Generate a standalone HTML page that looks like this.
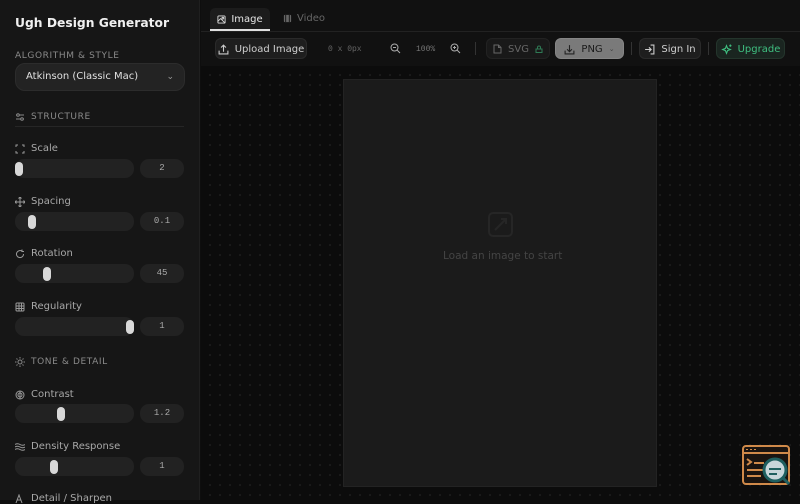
<!DOCTYPE html>
<html><head><style>
*{box-sizing:border-box;margin:0;padding:0}
body{width:800px;height:500px;overflow:hidden;background:#0e0e0e;font-family:"Liberation Sans","DejaVu Sans",sans-serif;position:relative;color:#ccc}
.a{position:absolute}
#side{left:0;top:0;width:200px;height:500px;background:#161616;border-right:1px solid #1f1f1f}
.lbl{font-size:9px;letter-spacing:.6px;color:#8a8a8a;font-family:"DejaVu Sans",sans-serif}
.fl{font-size:10px;color:#a8a8a8;font-family:"DejaVu Sans",sans-serif;display:flex;align-items:center;gap:6px}
.tr{left:15px;width:119px;height:19px;border-radius:9px;background:#222}
.th{width:8px;height:14px;border-radius:4px;background:#d8d8d8;top:2.5px}
.vb{left:140px;width:44px;height:19px;border-radius:9px;background:#222;font:9px "Liberation Mono",monospace;color:#aaa;text-align:center;line-height:19px}
#main{left:201px;top:66px;width:599px;height:434px;background-color:#0c0c0c;background-image:radial-gradient(circle,#1c1c1c 0.8px,transparent 1.2px);background-size:10px 10px;background-position:4px 4px}
.btn{top:38px;height:21px;border-radius:6px;background:#1e1e1e;border:1px solid #2a2a2a;font-size:10px;font-family:"DejaVu Sans",sans-serif;display:flex;align-items:center;justify-content:center;gap:6px;color:#cfcfcf;padding-top:1px}
.sep{top:42px;width:1px;height:13px;background:#333}
svg{display:block}
</style></head><body>
<div id="side" class="a">
 <div class="a" style="left:15px;top:16px;font-size:12.3px;font-weight:bold;color:#f0f0f0;font-family:'DejaVu Sans',sans-serif">Ugh Design Generator</div>
 <div class="a lbl" style="left:15px;top:51px">ALGORITHM &amp; STYLE</div>
 <div class="a" style="left:15px;top:63px;width:170px;height:28px;border-radius:10px;background:#232323;border:1px solid #2c2c2c;font-size:10px;font-family:'DejaVu Sans',sans-serif;color:#e0e0e0;padding-left:10px;line-height:26px">Atkinson (Classic Mac)<span class="a" style="right:10px;top:0;color:#999;font-size:9px">&#8964;</span></div>
 <div class="a lbl fl" style="left:15px;top:112px;font-size:9px;color:#8a8a8a">
  <svg width="10" height="10" viewBox="0 0 10 10" stroke="#888" fill="none"><path d="M1 3h8M1 7h8"/><circle cx="3" cy="3" r="1.3" fill="#161616"/><circle cx="7" cy="7" r="1.3" fill="#161616"/></svg>STRUCTURE</div>
 <div class="a" style="left:15px;top:126px;width:169px;height:1px;background:#262626"></div>

 <div class="a fl" style="left:15px;top:143px"><svg width="10" height="10" viewBox="0 0 10 10" stroke="#999" fill="none"><path d="M1 3V1h2M7 1h2v2M9 7v2H7M3 9H1V7"/></svg>Scale</div>
 <div class="a tr" style="top:159px"><div class="a th" style="left:0"></div></div><div class="a vb" style="top:159px">2</div>

 <div class="a fl" style="left:15px;top:196px"><svg width="10" height="10" viewBox="0 0 10 10" stroke="#999" fill="none"><path d="M5 0v10M0 5h10M3.5 1.5L5 0l1.5 1.5M3.5 8.5L5 10l1.5-1.5M1.5 3.5L0 5l1.5 1.5M8.5 3.5L10 5l-1.5 1.5"/></svg>Spacing</div>
 <div class="a tr" style="top:212px"><div class="a th" style="left:13px"></div></div><div class="a vb" style="top:212px">0.1</div>

 <div class="a fl" style="left:15px;top:248px"><svg width="10" height="10" viewBox="0 0 10 10" stroke="#999" fill="none"><path d="M8.5 5A3.5 3.5 0 1 1 7 2.2M7 0.5v2h2"/></svg>Rotation</div>
 <div class="a tr" style="top:264px"><div class="a th" style="left:28px"></div></div><div class="a vb" style="top:264px">45</div>

 <div class="a fl" style="left:15px;top:301px"><svg width="10" height="10" viewBox="0 0 10 10" stroke="#999" fill="none"><rect x="1" y="1" width="8" height="8" rx="1"/><path d="M1 4h8M1 6.5h8M4 1v8M6.5 1v8"/></svg>Regularity</div>
 <div class="a tr" style="top:317px"><div class="a th" style="left:111px"></div></div><div class="a vb" style="top:317px">1</div>

 <div class="a lbl fl" style="left:15px;top:357px;font-size:9px;color:#8a8a8a"><svg width="10" height="10" viewBox="0 0 10 10" stroke="#888" fill="none"><circle cx="5" cy="5" r="2"/><path d="M5 0v1.5M5 8.5V10M0 5h1.5M8.5 5H10M1.5 1.5l1 1M7.5 7.5l1 1M1.5 8.5l1-1M7.5 2.5l1-1"/></svg>TONE &amp; DETAIL</div>

 <div class="a fl" style="left:15px;top:389px"><svg width="10" height="10" viewBox="0 0 10 10" stroke="#999" fill="none"><circle cx="5" cy="5" r="4"/><path d="M5 1v8"/><circle cx="5" cy="5" r="2"/></svg>Contrast</div>
 <div class="a tr" style="top:404px"><div class="a th" style="left:42px"></div></div><div class="a vb" style="top:404px">1.2</div>

 <div class="a fl" style="left:15px;top:441px"><svg width="10" height="10" viewBox="0 0 10 10" stroke="#999" fill="none"><path d="M0 2.5q2.5-1.5 5 0t5 0M0 5q2.5-1.5 5 0t5 0M0 7.5q2.5-1.5 5 0t5 0"/></svg>Density Response</div>
 <div class="a tr" style="top:457px"><div class="a th" style="left:35px"></div></div><div class="a vb" style="top:457px">1</div>

 <div class="a fl" style="left:15px;top:493px"><svg width="10" height="10" viewBox="0 0 10 10" stroke="#999" fill="none"><path d="M1 9L4 1l3 8M2.5 6h3"/></svg>Detail / Sharpen</div>
</div>

<div class="a" style="left:201px;top:0;width:599px;height:66px;background:#111"></div>
<div class="a" style="left:201px;top:31px;width:599px;height:1px;background:#222"></div>
<div class="a" style="left:201px;top:66px;width:599px;height:1px;background:#1f1f1f"></div>
<div class="a" style="left:210px;top:8px;width:60px;height:23px;background:#1c1c1c;border-radius:5px 5px 0 0;border-bottom:2px solid #e0e0e0;font-size:10px;font-family:'DejaVu Sans',sans-serif;color:#e6e6e6;display:flex;align-items:center;justify-content:center;gap:5px;padding-top:1px"><svg width="9" height="9" viewBox="0 0 10 10" stroke="#ddd" fill="none"><rect x="1" y="1" width="8" height="8" rx="1"/><path d="M1 7l3-3 5 5"/><circle cx="6.5" cy="3.5" r="1"/></svg>Image</div>
<div class="a" style="left:283px;top:13px;font-size:10px;font-family:'DejaVu Sans',sans-serif;color:#666;display:flex;align-items:center;gap:5px"><svg width="9" height="9" viewBox="0 0 10 10" fill="#666"><rect x="1" y="1" width="8" height="8" rx="1"/><path d="M3 1v8M7 1v8" stroke="#111"/></svg>Video</div>

<div class="a btn" style="left:215px;width:92px"><svg width="11" height="11" viewBox="0 0 10 10" stroke="#ccc" fill="none"><path d="M1 6v3h8V6M5 7V1M2.8 3.2L5 1l2.2 2.2"/></svg>Upload Image</div>
<div class="a" style="left:328px;top:45px;font:8px 'Liberation Mono',monospace;color:#666">0 x 0px</div>
<div class="a" style="left:390px;top:43px"><svg width="11" height="11" viewBox="0 0 11 11" stroke="#aaa" fill="none"><circle cx="4.5" cy="4.5" r="3.5"/><path d="M7 7l3 3M3 4.5h3"/></svg></div>
<div class="a" style="left:416px;top:45px;font:8px 'Liberation Mono',monospace;color:#777">100%</div>
<div class="a" style="left:450px;top:43px"><svg width="11" height="11" viewBox="0 0 11 11" stroke="#aaa" fill="none"><circle cx="4.5" cy="4.5" r="3.5"/><path d="M7 7l3 3M3 4.5h3M4.5 3v3"/></svg></div>
<div class="a sep" style="left:475px"></div>
<div class="a btn" style="left:486px;width:64px;background:#191919;border-color:#222;color:#666"><svg width="9" height="10" viewBox="0 0 9 10" stroke="#666" fill="none"><path d="M1 1h4.5L8 3.5V9H1zM5.5 1v2.5H8"/></svg>SVG<svg width="8" height="8" viewBox="0 0 8 8" stroke="#2f7a55" fill="none"><path d="M1 4h6v3.5H1zM2.5 4V2.5a1.5 1.5 0 0 1 3 0V4"/></svg></div>
<div class="a btn" style="left:555px;width:69px;background:#7a7a7a;border-color:#858585;color:#1a1a1a"><svg width="11" height="11" viewBox="0 0 10 10" stroke="#222" fill="none"><path d="M1 6v3h8V6M5 1v6M2.8 4.8L5 7l2.2-2.2"/></svg>PNG<span style="font-size:7px;color:#444">&#8964;</span></div>
<div class="a sep" style="left:631px"></div>
<div class="a btn" style="left:639px;width:62px"><svg width="11" height="11" viewBox="0 0 10 10" stroke="#ccc" fill="none"><path d="M6 1h3v8H6M1 5h5.5M4.5 3l2 2-2 2"/></svg>Sign In</div>
<div class="a sep" style="left:708px"></div>
<div class="a btn" style="left:716px;width:69px;background:#1a2520;border-color:#24352c;color:#3fbf80"><svg width="11" height="11" viewBox="0 0 10 10" stroke="#3fbf80" fill="none"><path d="M5 1.5l1 2.5 2.5 1-2.5 1L5 8.5 4 6 1.5 5 4 4z"/><path d="M8.5 0.5v2M7.5 1.5h2"/></svg>Upgrade</div>

<div id="main" class="a"></div>
<div class="a" style="left:343px;top:79px;width:314px;height:408px;background:#1b1b1b;border:1px solid #232323"></div>
<div class="a" style="left:487px;top:211px"><svg width="27" height="27" viewBox="0 0 27 27" stroke="#262626" fill="none" stroke-width="2"><rect x="2" y="2" width="23" height="23" rx="4"/><path d="M8 19l11-11M14 8h5v5"/></svg></div>
<div class="a" style="left:443px;top:250px;font-size:10.5px;font-family:'DejaVu Sans',sans-serif;color:#444">Load an image to start</div>

<div class="a" style="left:742px;top:445px"><svg width="50" height="44" viewBox="0 0 50 44"><rect x="1" y="1" width="46" height="38" rx="3" fill="#1a1410" stroke="#d08a4a" stroke-width="2"/><path d="M1 8h46" stroke="#d08a4a" stroke-width="2"/><path d="M4 4.5h2M8 4.5h2M12 4.5h2" stroke="#d08a4a"/><path d="M5 14l4 3-4 3M12 18h10M5 25h16M5 31h14" stroke="#d08a4a" stroke-width="2" fill="none"/><circle cx="33" cy="25" r="11" fill="#c8d6da" stroke="#1f5f5f" stroke-width="3"/><path d="M27 24h12M27 29h8" stroke="#1f5f5f" stroke-width="2"/><path d="M41 33l6 6" stroke="#1f5f5f" stroke-width="3"/></svg></div>
</body></html>
